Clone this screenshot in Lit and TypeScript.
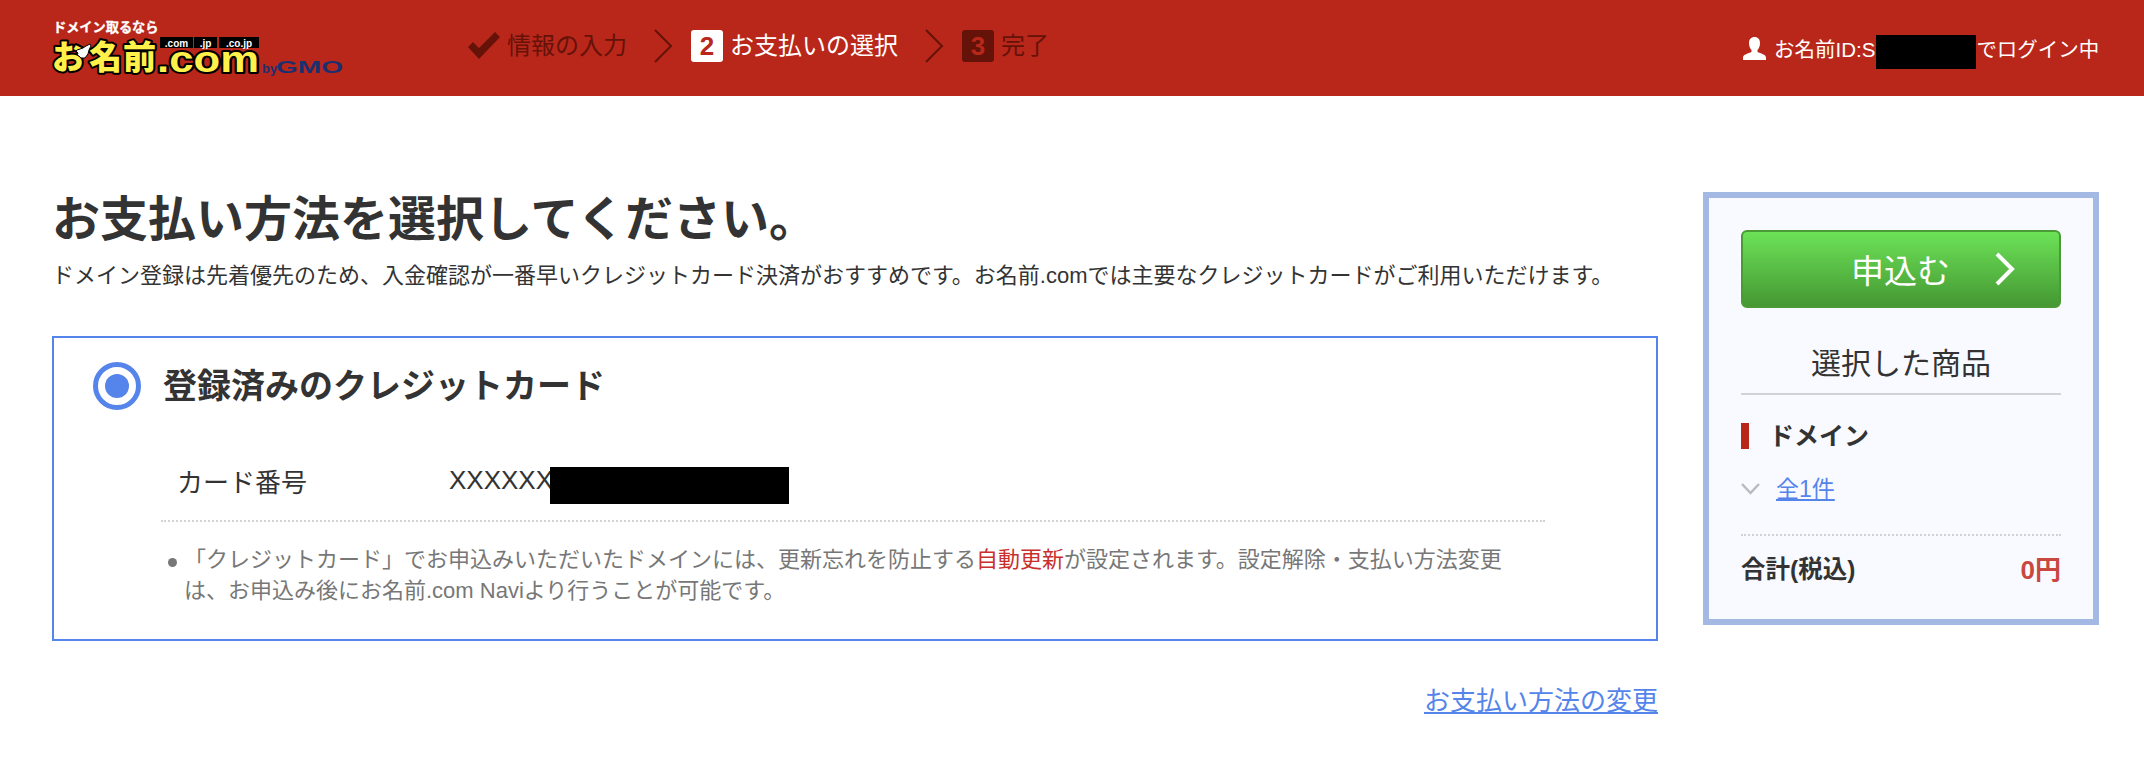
import { LitElement, html, css, svg } from "lit";
import { customElement } from "lit/decorators.js";

const logo = svg`<svg class="logo" width="300" height="80" viewBox="0 0 300 80">
  <text x="1" y="24" class="lg-top">ドメイン取るなら</text>
  <rect x="108" y="29" width="33" height="11" fill="#000"/>
  <rect x="142" y="29" width="23" height="11" fill="#000"/>
  <rect x="167" y="29" width="40" height="11" fill="#000"/>
  <text x="124.500" y="38.500" class="lg-tag">.com</text>
  <text x="153.500" y="38.500" class="lg-tag">.jp</text>
  <text x="187" y="38.500" class="lg-tag">.co.jp</text>
  <text x="0" y="61" class="lg-jp">お</text>
  <text x="37" y="61" class="lg-jp">名</text>
  <text x="71" y="61" class="lg-jp">前</text>
  <text x="105" y="64" class="lg-en" textLength="102" lengthAdjust="spacingAndGlyphs">.com</text>
  <path d="M25 42l6-2 3-2 4-2 1 2-2 4-1 4-3 4-4 0-2-2-2-1 1-2-2-2z" fill="#fff" stroke="#000" stroke-width="1"/>
  <text x="210" y="65" class="lg-by">by</text>
  <text x="224" y="65" class="lg-gmo" textLength="67" lengthAdjust="spacingAndGlyphs">GMO</text>
</svg>`;

@customElement("app-root")
export class AppRoot extends LitElement {
  static styles = css`
    :host {
      display: block;
      width: 2144px;
      height: 770px;
      background: #fff;
      overflow: hidden;
      font-family: "Liberation Sans", "Noto Sans CJK JP", sans-serif;
      color: #333;
    }
    * { box-sizing: border-box; }
    a { color: #5585ea; text-decoration: underline; }

    .topbar {
      height: 96px;
      background: #b9271a;
      display: flex;
      align-items: center;
      padding: 0 45px 0 52px;
    }
    .logo { flex: none; display: block; }
    .lg-top { font: 700 13.200px "Noto Sans CJK JP", sans-serif; fill: #fff; stroke: #fff; stroke-width: 0.300px; }
    .lg-tag { font: 700 10px "Liberation Sans", sans-serif; fill: #fff; text-anchor: middle; }
    .lg-jp {
      font: 900 33px "Noto Sans CJK JP", sans-serif;
      fill: #fff04a;
      stroke: #000;
      stroke-width: 4px;
      paint-order: stroke;
      stroke-linejoin: round;
    }
    .lg-en {
      font: 700 36px "Liberation Sans", sans-serif;
      fill: #fff04a;
      stroke: #000;
      stroke-width: 4px;
      paint-order: stroke;
      stroke-linejoin: round;
    }
    .lg-by { font: 700 13px "Liberation Sans", sans-serif; fill: #1c2f6e; }
    .lg-gmo { font: 700 17px "Liberation Sans", sans-serif; fill: #1c2f6e; }

    .steps {
      display: flex;
      align-items: center;
      margin-left: 116px;
      padding-bottom: 4px;
      font-size: 24px;
      line-height: 32px;
      color: #651209;
    }
    .steps .check { margin-right: 7px; display: block; }
    .steps .sep { margin: 0 18px 0 27px; display: block; }
    .num {
      width: 32px;
      height: 32px;
      border-radius: 3px;
      background: #651209;
      color: #b9271a;
      font-weight: 700;
      font-size: 26px;
      text-align: center;
      margin-right: 7px;
    }
    .cur { color: #fff; }
    .cur .num { background: #fff; color: #b9271a; }
    .step { display: flex; align-items: center; }

    .user {
      margin-left: auto;
      display: flex;
      align-items: center;
      gap: 8px;
      color: #fff;
      font-size: 20.500px;
      position: relative;
    }
    .user .id { width: 325px; white-space: nowrap; display: flex; }
    .user .spacer { width: 101px; flex: none; }
    .redact { position: absolute; background: #000; }
    .r-user { left: 133px; top: 2px; width: 100px; height: 34px; }

    .page {
      display: flex;
      justify-content: space-between;
      align-items: flex-start;
      padding: 0 45px 0 52px;
    }
    .main { width: 1606px; padding-top: 94px; }
    h1 {
      margin: 0;
      font-size: 48px;
      line-height: 60px;
      font-weight: 700;
      color: #333;
    }
    .lead { margin: 10px 0 0; font-size: 22px; line-height: 32px; color: #333; white-space: nowrap; }

    .card {
      margin-top: 44px;
      height: 305px;
      border: 2px solid #5585ea;
      padding: 24px 0 0 39px;
    }
    .card-head { display: flex; align-items: center; gap: 22px; }
    .radio {
      width: 48px;
      height: 48px;
      border-radius: 50%;
      border: 5px solid #5585ea;
      display: flex;
      align-items: center;
      justify-content: center;
      background: #fff;
    }
    .radio i { width: 24px; height: 24px; border-radius: 50%; background: #5585ea; display: block; }
    .card-head h2 { margin: 0; font-size: 34px; line-height: 48px; font-weight: 700; }
    .card-body { margin-left: 68px; width: 1384px; }
    .row {
      display: flex;
      align-items: center;
      height: 75px;
      margin-top: 37px;
      border-bottom: 2px dotted #d0d2d6;
      padding: 0 0 6px 16px;
      font-size: 26px;
      position: relative;
    }
    .row .label { width: 272px; }
    .r-card { left: 389px; top: 20px; width: 239px; height: 37px; }
    .note {
      margin: 23px 0 0;
      padding: 0 0 0 23px;
      font-size: 22px;
      line-height: 30.500px;
      color: #777;
      position: relative;
      width: 1360px;
    }
    .note::before {
      content: "";
      position: absolute;
      left: 7px;
      top: 13px;
      width: 9px;
      height: 9px;
      border-radius: 50%;
      background: #777;
    }
    .note em { font-style: normal; color: #c9302c; }
    .change { display: block; margin-top: 42px; text-align: right; font-size: 26px; line-height: 36px; }

    .side {
      margin-top: 96px;
      width: 396px;
      height: 433px;
      border: 6px solid #a3b8e2;
      background: #f9faff;
      padding: 32px 32px 0;
    }
    .apply {
      height: 78px;
      border: 2px solid #4a9a35;
      border-radius: 6px;
      background: linear-gradient(#6ce257, #459833);
      color: #fff;
      display: flex;
      align-items: center;
      font-size: 33px;
      padding-left: 108px;
    }
    .apply svg { margin-left: 45px; display: block; }
    .selected {
      margin: 34px 0 0;
      font-size: 30px;
      line-height: 44px;
      font-weight: 400;
      text-align: center;
      padding-bottom: 7px;
      border-bottom: 2px solid #d0d2d6;
    }
    .dom {
      margin-top: 28px;
      border-left: 8px solid #b9271a;
      padding-left: 20px;
      height: 26px;
      font-size: 25px;
      font-weight: 700;
      line-height: 26px;
    }
    .count { display: flex; align-items: center; margin-top: 26px; font-size: 23px; line-height: 28px; gap: 16px; }
    .count svg { display: block; }
    .total {
      display: flex;
      justify-content: space-between;
      align-items: center;
      margin-top: 31px;
      padding-top: 18px;
      border-top: 2px dotted #d0d2d6;
      font-size: 24.500px;
      line-height: 32px;
      font-weight: 700;
    }
    .total b { color: #c8473e; font-size: 26px; font-weight: 700; }
  `;

  render() {
    return html`
      <div class="topbar">
        ${logo}
        <div class="steps">
          <div class="step">
            <svg class="check" width="32" height="28" viewBox="0 0 32 28"><path d="M0 15l5-5 6 6L27 0l5 5-21 22z" fill="#651209"/></svg>
            情報の入力
          </div>
          <svg class="sep" width="19" height="34" viewBox="0 0 19 34"><path d="M1 1l16 16L1 33" fill="none" stroke="#651209" stroke-width="2"/></svg>
          <div class="step cur"><div class="num">2</div>お支払いの選択</div>
          <svg class="sep" width="19" height="34" viewBox="0 0 19 34"><path d="M1 1l16 16L1 33" fill="none" stroke="#651209" stroke-width="2"/></svg>
          <div class="step"><div class="num">3</div>完了</div>
        </div>
        <div class="user">
          <svg width="23" height="23" viewBox="0 0 23 23"><path d="M11.500 0c3.500 0 5.500 2.500 5.500 6 0 3-1 5.500-2.500 7v2c3 1.500 8.500 2.500 8.500 5.500V23H0v-2.500C0 17.500 5.500 16.500 8.500 15v-2C7 11.500 6 9 6 6c0-3.500 2-6 5.500-6z" fill="#fff"/></svg>
          <span class="id">お名前ID:S<span class="spacer"></span>でログイン中</span>
          <div class="redact r-user"></div>
        </div>
      </div>
      <div class="page">
        <div class="main">
          <h1>お支払い方法を選択してください。</h1>
          <p class="lead">ドメイン登録は先着優先のため、入金確認が一番早いクレジットカード決済がおすすめです。お名前.comでは主要なクレジットカードがご利用いただけます。</p>
          <div class="card">
            <div class="card-head">
              <div class="radio"><i></i></div>
              <h2>登録済みのクレジットカード</h2>
            </div>
            <div class="card-body">
              <div class="row">
                <span class="label">カード番号</span>
                <span>XXXXXX</span>
                <div class="redact r-card"></div>
              </div>
              <p class="note">「クレジットカード」でお申込みいただいたドメインには、更新忘れを防止する<em>自動更新</em>が設定されます。設定解除・支払い方法変更は、お申込み後にお名前.com Naviより行うことが可能です。</p>
            </div>
          </div>
          <a class="change" href="#">お支払い方法の変更</a>
        </div>
        <aside class="side">
          <div class="apply">
            申込む
            <svg width="20" height="34" viewBox="0 0 20 34"><path d="M2 2l15 15L2 32" fill="none" stroke="#fff" stroke-width="4"/></svg>
          </div>
          <h3 class="selected">選択した商品</h3>
          <div class="dom">ドメイン</div>
          <div class="count">
            <svg width="19" height="12" viewBox="0 0 19 12"><path d="M1 1l8.500 9L18 1" fill="none" stroke="#b9bbc0" stroke-width="2.500"/></svg>
            <a href="#">全1件</a>
          </div>
          <div class="total"><span>合計(税込)</span><b>0円</b></div>
        </aside>
      </div>
    `;
  }
}
